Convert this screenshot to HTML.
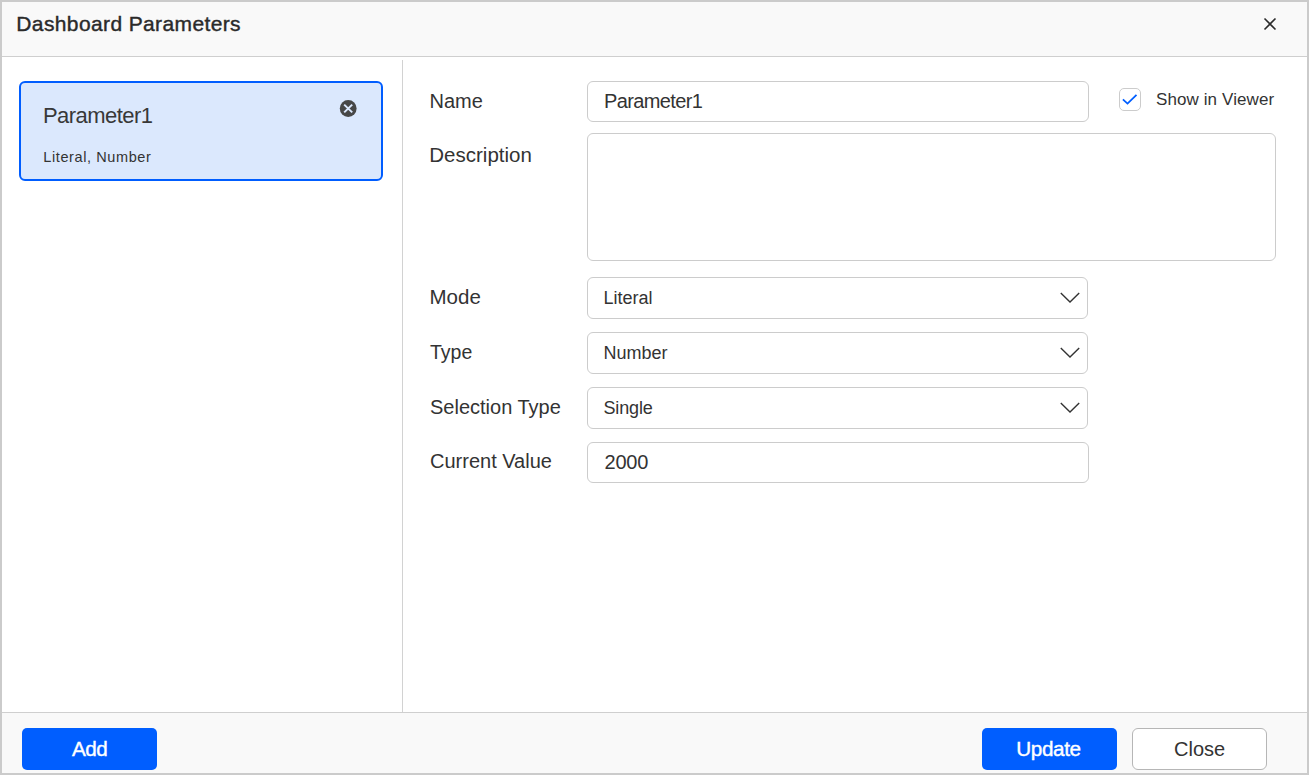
<!DOCTYPE html>
<html><head><meta charset="utf-8">
<style>
html,body{margin:0;padding:0;}
body{width:1309px;height:775px;position:relative;overflow:hidden;background:#cbcbcb;font-family:"Liberation Sans",sans-serif;color:#333;}
.abs{position:absolute;}
.t{position:absolute;line-height:1;white-space:nowrap;font-family:"Liberation Sans",sans-serif;}
#dlg{left:2px;top:2px;width:1305px;height:771px;background:#fff;}
#hdr{left:2px;top:2px;width:1305px;height:54px;background:#f9f9f9;}
#hline{left:2px;top:56px;width:1305px;height:1px;background:#cfcfcf;}
#vline{left:402px;top:60px;width:1px;height:652px;background:#d2d2d2;}
#fline{left:2px;top:712px;width:1305px;height:1px;background:#cfcfcf;}
#ftr{left:2px;top:713px;width:1305px;height:60px;background:#f9f9f9;}
.card{left:19px;top:81px;width:360px;height:96px;border:2px solid #005dff;border-radius:6px;background:#dbe8fd;}
.inp{box-sizing:border-box;border:1px solid #cccccc;border-radius:6px;background:#fff;}
.btn{box-sizing:border-box;border-radius:5px;}
.blue{background:#005eff;}
</style></head><body>
<div id="dlg" class="abs"></div>
<div id="hdr" class="abs"></div>
<div id="hline" class="abs"></div>
<div class="t" style="left:16.3px;top:13.1px;font-size:21px;letter-spacing:0.38px;-webkit-text-stroke:0.4px #2a2a2a;color:#2a2a2a;">Dashboard Parameters</div>
<svg class="abs" style="left:1262px;top:16px" width="16" height="16" viewBox="0 0 16 16"><path d="M2.5 2.5 L13.5 13.5 M13.5 2.5 L2.5 13.5" stroke="#2b2b2b" stroke-width="1.6" fill="none"/></svg>

<div id="vline" class="abs"></div>

<div class="abs card"></div>
<div class="t" style="left:43px;top:105.2px;font-size:22px;letter-spacing:-0.55px;color:#383838;">Parameter1</div>
<div class="t" style="left:43.3px;top:149.7px;font-size:14.5px;letter-spacing:0.6px;color:#333;">Literal, Number</div>
<svg class="abs" style="left:339px;top:100px" width="18" height="18" viewBox="0 0 18 18"><circle cx="9.2" cy="8.5" r="8.4" fill="#474747"/><path d="M5.2 4.6 L13.2 12.4 M13.2 4.6 L5.2 12.4" stroke="#dbe8fd" stroke-width="2" fill="none"/></svg>

<div class="t" style="left:429.5px;top:90.6px;font-size:20px;">Name</div>
<div class="abs inp" style="left:587px;top:81px;width:502px;height:41px;"></div>
<div class="t" style="left:604px;top:90.8px;font-size:20px;letter-spacing:-0.63px;">Parameter1</div>

<div class="abs inp" style="left:1119px;top:88px;width:22px;height:23px;border-radius:5px;"></div>
<svg class="abs" style="left:1119px;top:88px" width="22" height="22" viewBox="0 0 22 22"><path d="M3.9 11.4 L8.5 15.6 L17.5 6.8" stroke="#005eff" stroke-width="1.8" fill="none"/></svg>
<div class="t" style="left:1156px;top:91.3px;font-size:17px;letter-spacing:0.1px;">Show in Viewer</div>

<div class="t" style="left:429.3px;top:144.6px;font-size:20.5px;">Description</div>
<div class="abs inp" style="left:587px;top:133px;width:689px;height:128px;"></div>

<div class="t" style="left:429.5px;top:287px;font-size:20.5px;">Mode</div>
<div class="abs inp" style="left:587px;top:277px;width:501px;height:42px;"></div>
<div class="t" style="left:603.5px;top:288.8px;font-size:18px;">Literal</div>
<svg class="abs" style="left:1058px;top:290px" width="24" height="14" viewBox="0 0 24 14"><path d="M2.8 3.0 L12 12 L21.2 3.0" stroke="#333" stroke-width="1.4" fill="none"/></svg>

<div class="t" style="left:430px;top:343px;font-size:19.5px;">Type</div>
<div class="abs inp" style="left:587px;top:332px;width:501px;height:42px;"></div>
<div class="t" style="left:603.5px;top:343.7px;font-size:18px;">Number</div>
<svg class="abs" style="left:1058px;top:345px" width="24" height="14" viewBox="0 0 24 14"><path d="M2.8 3.0 L12 12 L21.2 3.0" stroke="#333" stroke-width="1.4" fill="none"/></svg>

<div class="t" style="left:430px;top:397px;font-size:20px;">Selection Type</div>
<div class="abs inp" style="left:587px;top:387px;width:501px;height:42px;"></div>
<div class="t" style="left:603.5px;top:398.7px;font-size:18px;letter-spacing:-0.15px;">Single</div>
<svg class="abs" style="left:1058px;top:400px" width="24" height="14" viewBox="0 0 24 14"><path d="M2.8 3.0 L12 12 L21.2 3.0" stroke="#333" stroke-width="1.4" fill="none"/></svg>

<div class="t" style="left:430px;top:451.4px;font-size:20px;">Current Value</div>
<div class="abs inp" style="left:587px;top:442px;width:502px;height:41px;"></div>
<div class="t" style="left:604.5px;top:451.8px;font-size:20px;letter-spacing:-0.2px;">2000</div>

<div id="fline" class="abs"></div>
<div id="ftr" class="abs"></div>
<div class="abs btn blue" style="left:22px;top:728px;width:135px;height:42px;"></div>
<div class="t" style="left:72px;top:739.1px;font-size:20.7px;letter-spacing:-0.5px;-webkit-text-stroke:0.4px #fff;color:#fff;">Add</div>
<div class="abs btn blue" style="left:982px;top:728px;width:135px;height:42px;"></div>
<div class="t" style="left:1016.3px;top:739.1px;font-size:20.7px;letter-spacing:-0.4px;-webkit-text-stroke:0.4px #fff;color:#fff;">Update</div>
<div class="abs btn" style="left:1132px;top:728px;width:135px;height:42px;border:1px solid #b6b6b6;border-radius:6px;background:#fff;"></div>
<div class="t" style="left:1174px;top:738.6px;font-size:20px;color:#333;">Close</div>
</body></html>
